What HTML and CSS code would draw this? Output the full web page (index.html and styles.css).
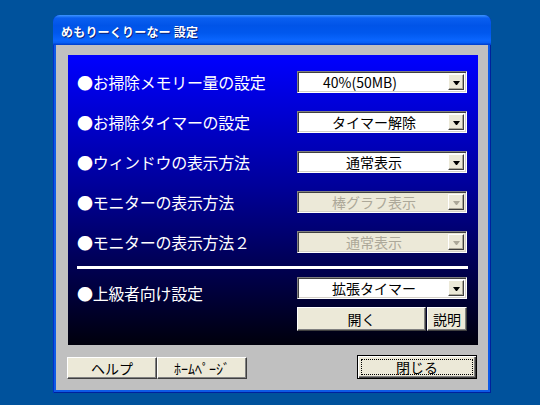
FILE: index.html
```html
<!DOCTYPE html>
<html lang="ja">
<head>
<meta charset="utf-8">
<title>めもりーくりーなー 設定</title>
<link rel="stylesheet" href="styles.css">
</head>
<body>
<div class="window">
  <div class="titlebar"><span class="title">めもりーくりーなー 設定</span></div>
  <div class="client">
    <div class="panel">
      <div class="row">
        <span class="label">●お掃除メモリー量の設定</span>
        <div class="combo"><span class="value value-left">40%(50MB)</span><span class="drop"><i class="arrow"></i></span></div>
      </div>
      <div class="row">
        <span class="label">●お掃除タイマーの設定</span>
        <div class="combo"><span class="value">タイマー解除</span><span class="drop"><i class="arrow"></i></span></div>
      </div>
      <div class="row">
        <span class="label">●ウィンドウの表示方法</span>
        <div class="combo"><span class="value">通常表示</span><span class="drop"><i class="arrow"></i></span></div>
      </div>
      <div class="row">
        <span class="label">●モニターの表示方法</span>
        <div class="combo combo-disabled"><span class="value">棒グラフ表示</span><span class="drop"><i class="arrow"></i></span></div>
      </div>
      <div class="row">
        <span class="label">●モニターの表示方法２</span>
        <div class="combo combo-disabled"><span class="value">通常表示</span><span class="drop"><i class="arrow"></i></span></div>
      </div>
      <div class="divider"></div>
      <div class="advanced">
        <span class="label label-adv">●上級者向け設定</span>
        <div class="adv-controls">
          <div class="combo"><span class="value">拡張タイマー</span><span class="drop"><i class="arrow"></i></span></div>
          <div class="btn-row">
            <button class="btn btn-open">開く</button>
            <button class="btn btn-info">説明</button>
          </div>
        </div>
      </div>
    </div>
    <div class="footer">
      <div class="left-btns">
        <button class="btn btn-foot">ヘルプ</button>
        <button class="btn btn-foot">ﾎｰﾑﾍﾟｰｼﾞ</button>
      </div>
      <button class="btn btn-default"><span class="focus">閉じる</span></button>
    </div>
  </div>
</div>
</body>
</html>
```

FILE: styles.css
```css
html, body {
  margin: 0;
  padding: 0;
}
body {
  background: #00529c;
  width: 540px;
  height: 405px;
  overflow: hidden;
  font-family: "Noto Sans CJK JP", "Liberation Sans", sans-serif;
}
.window {
  margin: 15px 0 0 53px;
  width: 438px;
  height: 378px;
  box-sizing: border-box;
  padding: 0 3px 3px 3px;
  background: #0d5ae6;
  border-radius: 7px 7px 0 0;
  box-shadow: inset 1px 0 #0030c8, inset -1px 0 #00209c, inset 0 -1px #00209c;
  display: flex;
  flex-direction: column;
}
.titlebar {
  height: 30px;
  margin: 0 -3px;
  border-radius: 7px 7px 0 0;
  background: linear-gradient(to bottom, #3d95ff 0%, #0a5ff0 10%, #0054e8 35%, #0058ee 60%, #0a66ff 85%, #0860f5 92%, #0048d8 97%, #003ecc 100%);
  display: flex;
  align-items: center;
  padding: 3px 0 0 8px;
  box-sizing: border-box;
}
.title {
  color: #fff;
  font-size: 12px;
  font-weight: bold;
  text-shadow: 1px 1px #0a1f7a;
  letter-spacing: 0.2px;
}
.client {
  flex: 1;
  background: #c0c0c0;
  padding-top: 10px;
  display: flex;
  flex-direction: column;
}
.panel {
  margin: 0 10px 0 12px;
  height: 290px;
  box-sizing: border-box;
  padding: 16px 11px 0 9px;
  background: linear-gradient(to bottom, #0000ff 0%, #00009a 45%, #000040 80%, #00000c 100%);
  display: flex;
  flex-direction: column;
}
.row {
  display: flex;
  justify-content: space-between;
  align-items: center;
  height: 22px;
  margin-bottom: 18px;
}
.row:nth-child(5) {
  margin-bottom: 0;
}
.label {
  color: #fff;
  font-size: 16px;
  line-height: 22px;
  white-space: nowrap;
  letter-spacing: -0.3px;
}
.combo {
  width: 170px;
  height: 22px;
  box-sizing: border-box;
  border: 1px solid;
  border-color: #808080 #ffffff #ffffff #808080;
  box-shadow: inset 1px 1px #404040, inset -1px -1px #d4d0c8;
  background: #fff;
  padding: 2px;
  display: flex;
  align-items: center;
}
.value {
  flex: 1;
  text-align: center;
  font-size: 14px;
  line-height: 16px;
  color: #000;
  white-space: nowrap;
}
.value-left {
  text-align: left;
  padding-left: 23px;
}
.drop {
  width: 16px;
  height: 16px;
  box-sizing: border-box;
  background: #ece9d8;
  border: 1px solid;
  border-color: #ffffff #404040 #404040 #ffffff;
  box-shadow: inset -1px -1px #aca899;
  display: flex;
  align-items: center;
  justify-content: center;
}
.arrow {
  display: block;
  width: 1px;
  height: 0;
  border-top: 4px solid #000;
  border-left: 3px solid transparent;
  border-right: 3px solid transparent;
  margin-top: 1px;
}
.combo-disabled {
  background: #ece9d8;
}
.combo-disabled .value {
  color: #aca899;
}
.combo-disabled .arrow {
  border-top-color: #aca899;
}
.divider {
  height: 3px;
  background: #fff;
  margin: 13px -1px 0 0;
}
.advanced {
  display: flex;
  justify-content: space-between;
  align-items: flex-start;
  margin-top: 8px;
}
.label-adv {
  padding-top: 5px;
}
.adv-controls {
  width: 170px;
  display: flex;
  flex-direction: column;
}
.btn-row {
  display: flex;
  gap: 1px;
  margin-top: 8px;
}
.btn {
  background: #ece9d8;
  border: 1px solid;
  border-color: #ffffff #404040 #404040 #ffffff;
  box-shadow: inset -1px -1px #808080;
  font-family: "Noto Sans CJK JP", "Liberation Sans", sans-serif;
  font-size: 14px;
  line-height: 16px;
  color: #000;
  padding: 0;
  margin: 0;
  box-sizing: border-box;
}
.btn-open {
  width: 129px;
  height: 24px;
}
.btn-info {
  width: 40px;
  height: 24px;
}
.footer {
  display: flex;
  justify-content: space-between;
  align-items: flex-end;
  margin: 10px 11px 0 11px;
  height: 24px;
}
.left-btns {
  display: flex;
}
.btn-foot {
  width: 90px;
  height: 22px;
  font-size: 14px;
}
.btn-default {
  width: 120px;
  height: 24px;
  border: 1px solid #000;
  box-shadow: inset 1px 1px #fff, inset -1px -1px #404040, inset -2px -2px #808080;
  display: flex;
  padding: 3px;
}
.focus {
  flex: 1;
  border: 1px dotted #000;
  display: flex;
  align-items: center;
  justify-content: center;
}
```
